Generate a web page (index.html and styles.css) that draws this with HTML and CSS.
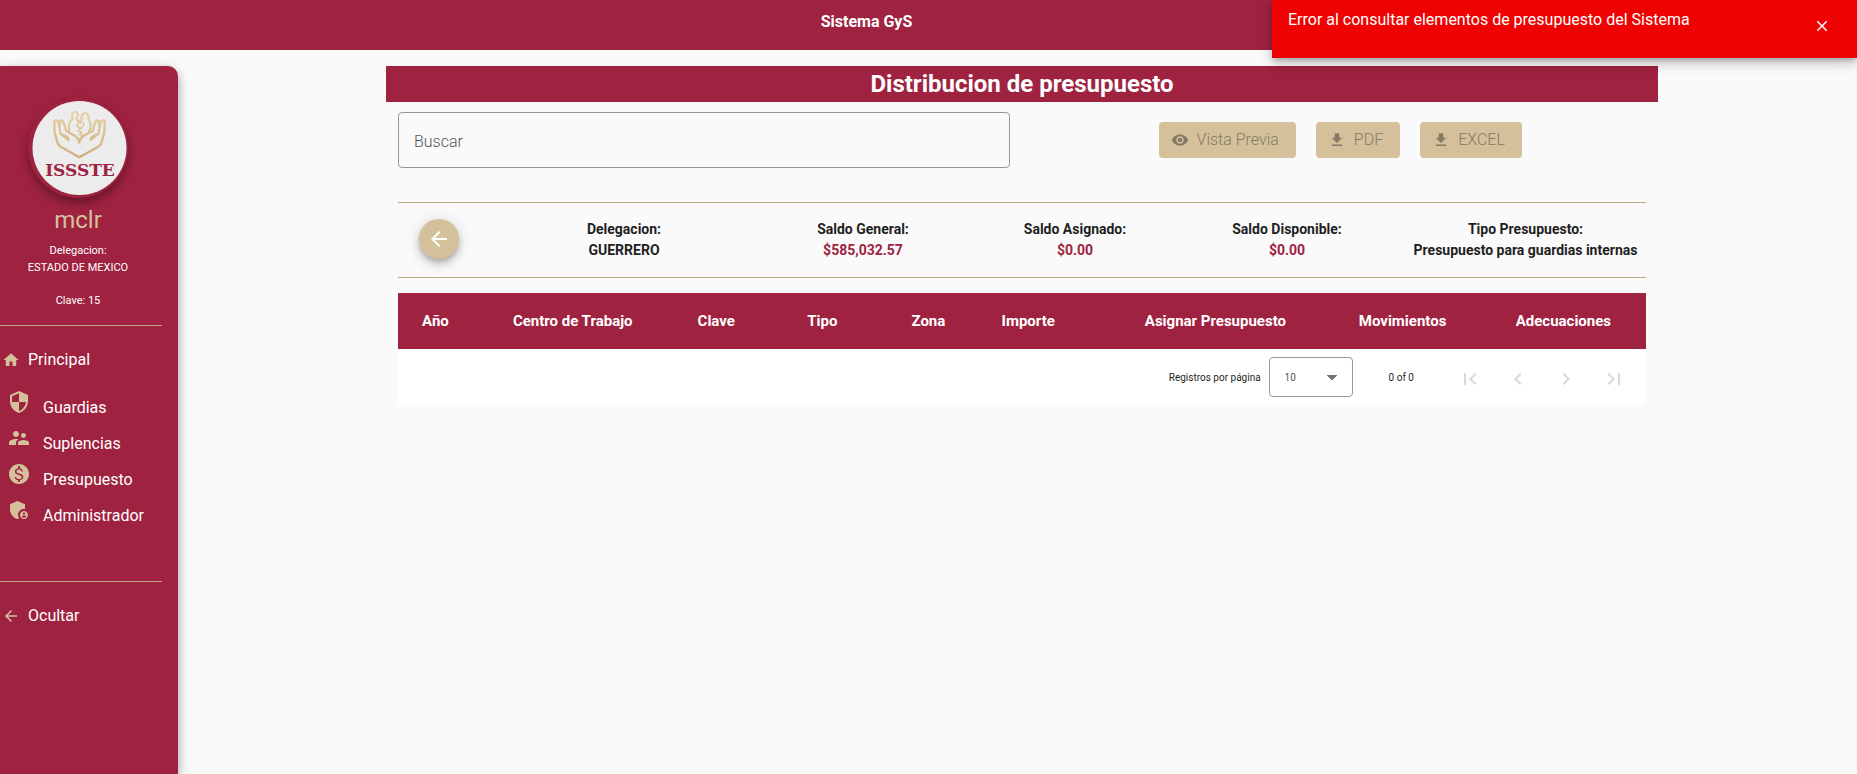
FILE: index.html
```html
<!DOCTYPE html>
<html lang="es">
<head>
<meta charset="utf-8">
<title>Sistema GyS</title>
<link rel="stylesheet" href="styles.css">
</head>
<body>
<svg class="sprite" aria-hidden="true">
  <symbol id="i-home" viewBox="0 0 24 24"><path d="M10 20v-6h4v6h5v-8h3L12 3 2 12h3v8z"/></symbol>
  <symbol id="i-security" viewBox="0 0 24 24"><path d="M12 1L3 5v6c0 5.55 3.84 10.74 9 12 5.16-1.26 9-6.45 9-12V5l-9-4zm0 10.99h7c-.53 4.12-3.28 7.79-7 8.94V12H5V6.3l7-3.11v8.8z"/></symbol>
  <symbol id="i-people" viewBox="0 0 24 24"><path d="M16.5 12c1.38 0 2.49-1.12 2.49-2.5S17.88 7 16.5 7C15.12 7 14 8.12 14 9.5s1.12 2.5 2.5 2.5zM9 11c1.66 0 2.99-1.34 2.99-3S10.66 5 9 5C7.34 5 6 6.34 6 8s1.34 3 3 3zm7.5 3c-1.83 0-5.5.92-5.5 2.75V19h11v-2.25c0-1.83-3.67-2.75-5.5-2.75zM9 13c-2.33 0-7 1.17-7 3.5V19h7v-2.25c0-.85.33-2.34 2.37-3.47C10.5 13.1 9.66 13 9 13z"/></symbol>
  <symbol id="i-money" viewBox="0 0 24 24"><path d="M12 2C6.48 2 2 6.48 2 12s4.48 10 10 10 10-4.48 10-10S17.52 2 12 2zm.9 16.2V20h-1.800v-1.700c-1.900-.3-3.300-1.400-3.400-3.300h1.500c.1 1.200 1 2.100 2.800 2.100 2 0 2.700-1 2.700-1.900 0-1-.6-1.800-2.900-2.300-2.500-.6-3.900-1.500-3.900-3.400 0-1.700 1.300-2.800 3.200-3.200V4h1.800v2.300c1.900.4 2.800 1.700 2.900 3.200h-1.500c-.1-1.200-.8-2-2.300-2s-2.500.7-2.500 1.900c0 1 .8 1.600 2.900 2.100s3.900 1.300 3.900 3.600c0 1.800-1.400 2.800-3.400 3.100z"/></symbol>
  <symbol id="i-admin" viewBox="0 0 24 24"><path d="M17 11c.34 0 .67.04 1 .09V6.27L10.5 3 3 6.27v4.91c0 4.54 3.2 8.79 7.5 9.82.55-.13 1.08-.32 1.6-.55-.69-.98-1.1-2.17-1.1-3.45 0-3.31 2.69-6 6-6z"/><path d="M17 13c-2.21 0-4 1.79-4 4s1.79 4 4 4 4-1.79 4-4-1.79-4-4-4zm0 1.38c.62 0 1.12.51 1.12 1.12s-.51 1.12-1.12 1.12-1.12-.51-1.12-1.12.5-1.12 1.12-1.12zm0 5.37c-.93 0-1.74-.46-2.24-1.17.05-.72 1.51-1.08 2.24-1.08s2.19.36 2.24 1.08c-.5.71-1.31 1.17-2.24 1.17z"/></symbol>
  <symbol id="i-back" viewBox="0 0 24 24"><path d="M20 11H7.83l5.59-5.59L12 4l-8 8 8 8 1.41-1.41L7.83 13H20v-2z"/></symbol>
  <symbol id="i-eye" viewBox="0 0 24 24"><path d="M12 4.5C7 4.5 2.73 7.61 1 12c1.73 4.39 6 7.5 11 7.5s9.27-3.11 11-7.5c-1.73-4.39-6-7.5-11-7.5zM12 17c-2.76 0-5-2.24-5-5s2.24-5 5-5 5 2.24 5 5-2.24 5-5 5zm0-8c-1.66 0-3 1.34-3 3s1.34 3 3 3 3-1.34 3-3-1.34-3-3-3z"/></symbol>
  <symbol id="i-download" viewBox="0 0 24 24"><path d="M19 9h-4V3H9v6H5l7 7 7-7zM5 18v2h14v-2H5z"/></symbol>
  <symbol id="i-close" viewBox="0 0 24 24"><path d="M19 6.41L17.59 5 12 10.59 6.41 5 5 6.41 10.59 12 5 17.59 6.41 19 12 13.41 17.59 19 19 17.59 13.41 12z"/></symbol>
  <symbol id="i-first" viewBox="0 0 24 24"><path d="M18.41 16.59L13.82 12l4.59-4.59L17 6l-6 6 6 6zM6 6h2v12H6z"/></symbol>
  <symbol id="i-prev" viewBox="0 0 24 24"><path d="M15.41 7.41L14 6l-6 6 6 6 1.41-1.41L10.83 12z"/></symbol>
  <symbol id="i-next" viewBox="0 0 24 24"><path d="M10 6L8.59 7.41 13.17 12l-4.58 4.59L10 18l6-6z"/></symbol>
  <symbol id="i-last" viewBox="0 0 24 24"><path d="M5.59 7.41L10.18 12l-4.59 4.59L7 18l6-6-6-6zM16 6h2v12h-2z"/></symbol>
</svg>

<header class="topbar"><span>Sistema GyS</span></header>

<div class="toast" role="alert">
  <p>Error al consultar elementos de presupuesto del Sistema</p>
  <button class="toast-close" type="button" aria-label="Cerrar"><svg class="icon-18"><use href="#i-close"/></svg></button>
</div>

<div class="layout">
  <aside class="sidebar">
    <div class="profile">
      <svg class="logo" viewBox="0 0 100 100" role="img" aria-label="ISSSTE">
        <defs>
          <linearGradient id="gold" gradientUnits="userSpaceOnUse" x1="0" y1="60" x2="0" y2="205">
            <stop offset="0" stop-color="#e6d3a3"/><stop offset="1" stop-color="#cdae7c"/>
          </linearGradient>
        </defs>
        <circle cx="51.500" cy="50" r="47" fill="#ececec"/>
        <g transform="translate(-8 -8) scale(.33333)" fill="none" stroke="url(#gold)" stroke-width="7" stroke-linejoin="round" stroke-linecap="round">
          <path d="M178 202L122 170Q114 165 112 156L104 128Q102 98 104 92Q108 88 114 94L118 110L121 93Q126 89 130 96L139 123L162 136Q176 144 178 158Q180 144 194 136L218 123L226 96Q231 89 236 93L239 110L243 94Q249 88 253 92Q255 98 253 128L245 156Q243 165 235 170Z"/>
          <path d="M118 108L121 131L146 151M239 108L236 131L211 151" stroke-width="6"/>
          <path d="M121 131Q135 135 146 144M236 131Q222 135 211 144" stroke-width="5"/>
          <path d="M148 122Q143 96 158 87Q154 81 157 70Q166 60 173 70Q176 80 169 87L182 100M207 124Q218 104 205 87Q209 74 195 68Q181 76 185 88L178 96" stroke-width="6"/>
          <path d="M178 90Q170 95 175 103L168 108L180 112L174 124L185 126L178 134L188 136Q188 146 179 146M187 96Q196 103 189 109L180 118" stroke-width="4"/>
        </g>
        <text class="logo-text" x="52" y="78" text-anchor="middle">ISSSTE</text>
      </svg>
      <h2 class="user">mclr</h2>
      <p class="meta">Delegacion:<br>ESTADO DE MEXICO</p>
      <p class="meta">Clave: 15</p>
    </div>
    <nav class="menu">
      <a class="item main" href="#"><svg class="icon-18"><use href="#i-home"/></svg><span>Principal</span></a>
      <div class="submenu">
        <a class="item sub" href="#"><svg class="icon-24"><use href="#i-security"/></svg><span>Guardias</span></a>
        <a class="item sub" href="#"><svg class="icon-24"><use href="#i-people"/></svg><span>Suplencias</span></a>
        <a class="item sub" href="#"><svg class="icon-24"><use href="#i-money"/></svg><span>Presupuesto</span></a>
        <a class="item sub" href="#"><svg class="icon-24"><use href="#i-admin"/></svg><span>Administrador</span></a>
      </div>
    </nav>
    <button class="item main hide" type="button"><svg class="icon-18"><use href="#i-back"/></svg><span>Ocultar</span></button>
  </aside>

  <main class="content">
    <h1 class="title">Distribucion de presupuesto</h1>
    <div class="body">
      <div class="toolbar">
        <input class="search" type="text" placeholder="Buscar" aria-label="Buscar">
        <div class="actions">
          <button class="btn" type="button" disabled><svg class="icon-18"><use href="#i-eye"/></svg><span>Vista Previa</span></button>
          <button class="btn" type="button" disabled><svg class="icon-18"><use href="#i-download"/></svg><span>PDF</span></button>
          <button class="btn" type="button" disabled><svg class="icon-18"><use href="#i-download"/></svg><span>EXCEL</span></button>
        </div>
      </div>

      <section class="summary">
        <div class="back-cell"><button class="fab" type="button" aria-label="Regresar"><svg class="icon-24"><use href="#i-back"/></svg></button></div>
        <div class="stat"><span>Delegacion:</span><span>GUERRERO</span></div>
        <div class="stat"><span>Saldo General:</span><span class="amount">$585,032.57</span></div>
        <div class="stat"><span>Saldo Asignado:</span><span class="amount">$0.00</span></div>
        <div class="stat"><span>Saldo Disponible:</span><span class="amount">$0.00</span></div>
        <div class="stat"><span>Tipo Presupuesto:</span><span>Presupuesto para guardias internas</span></div>
      </section>

      <table class="grid">
        <colgroup><col class="c-year"><col class="c-center"><col class="c-key"><col class="c-type"><col class="c-zone"><col class="c-amount"><col class="c-assign"><col class="c-moves"><col class="c-adjust"></colgroup>
        <thead>
          <tr><th>Año</th><th>Centro de Trabajo</th><th>Clave</th><th>Tipo</th><th>Zona</th><th>Importe</th><th>Asignar Presupuesto</th><th>Movimientos</th><th>Adecuaciones</th></tr>
        </thead>
      </table>

      <div class="pager">
        <label for="page-size">Registros por página</label>
        <select id="page-size" class="page-size"><option>10</option></select>
        <span class="range">0 of 0</span>
        <div class="pages">
          <button type="button" disabled aria-label="Primera página"><svg class="icon-24"><use href="#i-first"/></svg></button>
          <button type="button" disabled aria-label="Página anterior"><svg class="icon-24"><use href="#i-prev"/></svg></button>
          <button type="button" disabled aria-label="Página siguiente"><svg class="icon-24"><use href="#i-next"/></svg></button>
          <button type="button" disabled aria-label="Última página"><svg class="icon-24"><use href="#i-last"/></svg></button>
        </div>
      </div>
    </div>
  </main>
</div>
</body>
</html>
```
FILE: styles.css
```css
:root {
  --wine: #9f2241;
  --gold: #d4c19c;
  --line: #bda986;
}

* { box-sizing: border-box; }

body {
  margin: 0;
  min-height: 100vh;
  display: flex;
  flex-direction: column;
  background: #fafafa;
  color: #1f1f1f;
  font-family: Roboto, "Liberation Sans", sans-serif;
  font-size: 16px;
}

h1, h2, p { margin: 0; }
a { color: inherit; text-decoration: none; }
button, input, select { font: inherit; color: inherit; }
button { border: 0; background: none; padding: 0; }

.sprite { display: none; }
.icon-18, .icon-24 { display: block; flex: none; fill: currentColor; }
.icon-18 { width: 18px; height: 18px; }
.icon-24 { width: 24px; height: 24px; }

.topbar {
  height: 50px;
  padding: 10px 124px 0 0;
  text-align: center;
  background: var(--wine);
  color: #fff;
  font-weight: 700;
  line-height: 24px;
}

.toast {
  position: absolute;
  top: 0;
  right: 0;
  width: 585px;
  height: 58px;
  padding: 8px 26px 0 16px;
  display: flex;
  justify-content: space-between;
  align-items: flex-start;
  background: #ef0202;
  color: #fff;
  line-height: 24px;
  box-shadow: 0 3px 5px -1px rgba(0,0,0,.2), 0 6px 10px rgba(0,0,0,.14), 0 1px 18px rgba(0,0,0,.12);
}
.toast-close { padding-top: 9px; }

.layout {
  flex: 1;
  display: flex;
  align-items: stretch;
  padding-top: 16px;
}

.sidebar {
  flex: none;
  width: 178px;
  padding: 32px 16px 0 0;
  background: var(--wine);
  color: #fff;
  border-top-right-radius: 10px;
  box-shadow: 0 5px 8px rgba(0,0,0,.2), 0 3px 14px rgba(0,0,0,.2);
}

.profile {
  display: flex;
  flex-direction: column;
  align-items: center;
  gap: 16px;
  padding-bottom: 16px;
  padding-right: 6px;
  border-bottom: 1px solid var(--line);
}
.logo {
  width: 100px;
  height: 100px;
  border-radius: 50%;
  box-shadow: 0 5px 10px rgba(0,0,0,.35);
  background: var(--wine);
}
.logo-text {
  font-family: "DejaVu Serif", serif;
  font-size: 17px;
  font-weight: 700;
  fill: var(--wine);
}
.user {
  margin: -8px 0;
  color: var(--gold);
  font-size: 24px;
  font-weight: 400;
  line-height: 28px;
}
.meta {
  text-align: center;
  font-size: 11px;
  line-height: 17px;
}

.menu {
  padding: 20px 0 50px;
  border-bottom: 1px solid var(--line);
}
.item { display: flex; line-height: 28px; }
.item svg { color: var(--gold); }
.main { align-items: center; gap: 8px; padding-left: 2px; }
.submenu { padding: 13px 0 0 7px; }
.sub { height: 36px; gap: 12px; }
.sub svg { margin-top: 3px; }
.sub span { padding-top: 7px; }
.hide { margin-top: 20px; }

.content {
  flex: 1;
  padding: 0 199px 0 208px;
}
.title {
  background: var(--wine);
  color: #fff;
  text-align: center;
  font-size: 24px;
  font-weight: 700;
  line-height: 36px;
}
.body { padding: 10px 12px; }

.toolbar { display: flex; align-items: flex-start; }
.search {
  width: 49%;
  height: 56px;
  padding: 2px 15px 0;
  border: 1px solid #999;
  border-radius: 4px;
  background: transparent;
  font-weight: 300;
}
.search::placeholder { color: #555; opacity: 1; }
.actions {
  flex: 1;
  display: flex;
  gap: 20px;
  padding: 10px 0 0 149px;
}
.btn {
  height: 36px;
  padding: 0 17px 1px 12px;
  display: flex;
  align-items: center;
  gap: 8px;
  border-radius: 4px;
  background: var(--gold);
  color: #857a63;
  font-weight: 300;
}

.summary {
  margin-top: 34px;
  display: grid;
  grid-template-columns: 105fr 242fr 236fr 188fr 236fr 241fr;
  align-items: center;
  height: 76px;
  border-top: 1px solid var(--line);
  border-bottom: 1px solid var(--line);
}
.back-cell { display: flex; padding: 0 0 2px 21px; }
.fab {
  width: 40px;
  height: 40px;
  padding: 8px;
  border-radius: 50%;
  background: var(--gold);
  color: #fff;
  box-shadow: 0 3px 5px -1px rgba(0,0,0,.2), 0 6px 10px rgba(0,0,0,.14), 0 1px 18px rgba(0,0,0,.12);
}
.stat {
  display: flex;
  flex-direction: column;
  align-items: center;
  font-size: 14px;
  font-weight: 700;
  line-height: 21px;
  white-space: nowrap;
}
.amount { color: var(--wine); }

.grid {
  width: 100%;
  margin-top: 15px;
  table-layout: fixed;
  border-collapse: collapse;
  background: var(--wine);
  color: #fff;
}
.grid th {
  height: 56px;
  padding: 0;
  font-size: 15px;
  font-weight: 700;
  white-space: nowrap;
}
.grid th:last-child { padding-left: 22px; }
.c-year { width: 6%; }
.c-center { width: 16%; }
.c-key { width: 7%; }
.c-type { width: 10%; }
.c-zone { width: 7%; }
.c-amount { width: 9%; }
.c-assign { width: 21%; }
.c-moves { width: 9%; }
.c-adjust { width: 15%; }

.pager {
  height: 56px;
  padding-right: 8px;
  display: flex;
  align-items: center;
  justify-content: flex-end;
  background: #fff;
  font-size: 10px;
}
.page-size {
  width: 84px;
  height: 40px;
  margin: 0 36px 0 8px;
  padding: 0 15px;
  appearance: none;
  border: 1px solid #999;
  border-radius: 4px;
  color: #555;
  background: linear-gradient(to bottom right, #757575 50%, transparent 51%) 62px 17px / 5px 5px no-repeat,
              linear-gradient(to bottom left, #757575 50%, transparent 51%) 57px 17px / 5px 5px no-repeat, #fff;
}
.range { margin-right: 32px; }
.pages { display: flex; padding-top: 4px; }
.pages button { width: 48px; padding: 0 12px; color: #d8d8d8; }
```
